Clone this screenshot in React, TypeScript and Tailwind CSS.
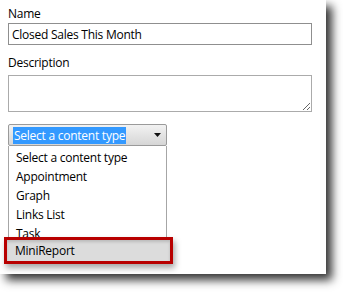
import React from 'react';

const font = { fontFamily: '"Open Sans", "Noto Sans", sans-serif' };

export default function App() {
  const items = ['Select a content type', 'Appointment', 'Graph', 'Links List', 'Task'];
  return (
    <div className="w-[343px] h-[292px] bg-white overflow-hidden" style={font}>
      <div className="w-[326px] h-[274px] bg-white shadow-[6px_6px_9px_rgba(0,0,0,0.8)] px-2 pt-[5px] text-[12px] tracking-[-0.25px] text-black">
        <div className="leading-[18px]">Name</div>
        <input
          readOnly
          value="Closed Sales This Month"
          className="block w-[304px] h-[22px] border border-[#8f8f8f] px-[3px] text-[12px] tracking-[-0.25px] outline-none"
        />
        <div className="leading-[18px] mt-[9px] mb-[3px]">Description</div>
        <textarea
          readOnly
          className="block w-[304px] h-[37px] border border-[#ababab] resize outline-none"
        />
        <div className="mt-[12px] w-[159px]">
          <div className="h-[22px] border border-[#9a9a9a] rounded-[2px] bg-gradient-to-b from-[#f2f2f2] to-[#d6d6d6] flex items-center pl-[4px] pr-[5px]">
            <span className="bg-[#3399ff] text-white leading-[17px] px-[1px]">Select a content type</span>
            <svg className="ml-auto" width="7" height="4" viewBox="0 0 7 4">
              <path d="M0 0 H7 L3.5 4 Z" fill="#111" />
            </svg>
          </div>
          <div className="border-x border-[#a6a6a6] pt-[2px]">
            {items.map(t => (
              <div key={t} className="h-[19px] leading-[19px] pl-[7px]">{t}</div>
            ))}
          </div>
          <div className="relative h-[21px] -mt-[3px]">
            <div className="absolute -top-[3px] -bottom-[3px] -left-[4px] -right-[6px] border-[3px] border-[#b80000] bg-[#dcdcdc] shadow-[2px_4px_6px_rgba(0,0,0,0.35),inset_0_2px_3px_rgba(0,0,0,0.15)]" />
            <div className="relative leading-[21px] pl-[7px]">MiniReport</div>
          </div>
        </div>
      </div>
    </div>
  );
}
